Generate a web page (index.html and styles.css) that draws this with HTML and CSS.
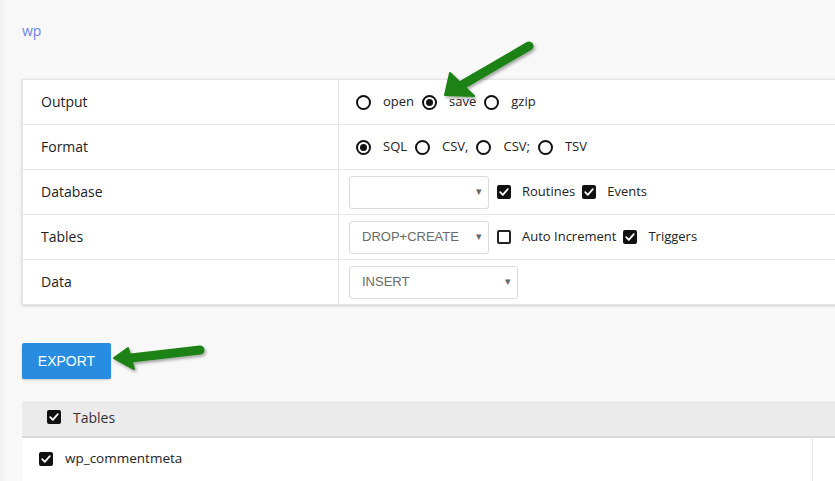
FILE: index.html
```html
<!DOCTYPE html>
<html>
<head>
<meta charset="utf-8">
<link rel="stylesheet" href="styles.css">
</head>
<body>
<div class="page">
  <div class="crumb"><a class="crumb-link">wp</a></div>

  <div class="card">
    <div class="row">
      <div class="label">Output</div>
      <div class="ctrl">
        <span class="opt"><span class="radio"></span><span class="txt">open</span></span>
        <span class="opt"><span class="radio on"></span><span class="txt">save</span></span>
        <span class="opt"><span class="radio"></span><span class="txt">gzip</span></span>
      </div>
    </div>
    <div class="row">
      <div class="label">Format</div>
      <div class="ctrl">
        <span class="opt"><span class="radio on"></span><span class="txt">SQL</span></span>
        <span class="opt"><span class="radio"></span><span class="txt">CSV,</span></span>
        <span class="opt"><span class="radio"></span><span class="txt">CSV;</span></span>
        <span class="opt"><span class="radio"></span><span class="txt">TSV</span></span>
      </div>
    </div>
    <div class="row">
      <div class="label">Database</div>
      <div class="ctrl">
        <div class="select w139"><span class="sel-text"></span><span class="caret">▾</span></div>
        <span class="opt chk"><span class="check on"><svg viewBox="0 0 14 14"><path d="M3.2 7.2 L5.8 9.8 L10.8 4.2" /></svg></span><span class="txt">Routines</span></span>
        <span class="opt chk"><span class="check on"><svg viewBox="0 0 14 14"><path d="M3.2 7.2 L5.8 9.8 L10.8 4.2" /></svg></span><span class="txt">Events</span></span>
      </div>
    </div>
    <div class="row">
      <div class="label">Tables</div>
      <div class="ctrl">
        <div class="select w139"><span class="sel-text">DROP+CREATE</span><span class="caret">▾</span></div>
        <span class="opt chk"><span class="check"></span><span class="txt">Auto Increment</span></span>
        <span class="opt chk"><span class="check on"><svg viewBox="0 0 14 14"><path d="M3.2 7.2 L5.8 9.8 L10.8 4.2" /></svg></span><span class="txt">Triggers</span></span>
      </div>
    </div>
    <div class="row last">
      <div class="label">Data</div>
      <div class="ctrl">
        <div class="select w168"><span class="sel-text">INSERT</span><span class="caret">▾</span></div>
      </div>
    </div>
  </div>

  <div class="actions"><button class="export">EXPORT</button></div>

  <div class="tables">
    <div class="tables-head">
      <span class="check on"><svg viewBox="0 0 14 14"><path d="M3.2 7.2 L5.8 9.8 L10.8 4.2" /></svg></span>
      <span class="head-txt">Tables</span>
    </div>
    <div class="tables-body">
      <div class="trow">
        <span class="check on"><svg viewBox="0 0 14 14"><path d="M3.2 7.2 L5.8 9.8 L10.8 4.2" /></svg></span>
        <span class="trow-txt">wp_commentmeta</span>
      </div>
    </div>
  </div>
</div>

<svg class="arrow arrow1" width="110" height="80" viewBox="0 0 110 80">
  <defs>
    <filter id="sh1" x="-20%" y="-20%" width="140%" height="140%">
      <feDropShadow dx="1.5" dy="2" stdDeviation="1.5" flood-color="#000" flood-opacity="0.35"/>
    </filter>
  </defs>
  <g filter="url(#sh1)" fill="#1e8216" stroke="#1e8216">
    <line x1="95" y1="11" x2="28" y2="50" stroke-width="9" stroke-linecap="round"/>
    <polygon points="11,60 16,38 40,61" stroke-width="2" stroke-linejoin="round"/>
  </g>
</svg>

<svg class="arrow arrow2" width="110" height="40" viewBox="0 0 110 40">
  <defs>
    <filter id="sh2" x="-20%" y="-30%" width="140%" height="160%">
      <feDropShadow dx="1.5" dy="2" stdDeviation="1.5" flood-color="#000" flood-opacity="0.35"/>
    </filter>
  </defs>
  <g filter="url(#sh2)" fill="#1e8216" stroke="#1e8216">
    <line x1="97" y1="12" x2="28" y2="20" stroke-width="9" stroke-linecap="round"/>
    <polygon points="11,20 25,10 31,31" stroke-width="2" stroke-linejoin="round"/>
  </g>
</svg>
</body>
</html>
```

FILE: styles.css
```css
* { box-sizing: border-box; }
html, body { margin: 0; padding: 0; }
body {
  background: #f8f8f8;
  font-family: "Open Sans", "Liberation Sans", sans-serif;
  color: #222;
  width: 835px;
  height: 481px;
  overflow: hidden;
  position: relative;
  box-shadow: inset 6px 0 6px -5px rgba(0,0,0,0.06);
}
.page {
  padding: 21px 0 0 22px;
}
.crumb {
  height: 21px;
  line-height: 20px;
  font-size: 14px;
}
.crumb-link {
  color: #6a87ec;
  text-decoration: none;
}
.card {
  margin-top: 37px;
  width: 830px;
  background: #fff;
  border: 1px solid #e4e4e4;
  border-right: none;
  box-shadow: 0 1px 3px rgba(0,0,0,0.18);
}
.row {
  display: grid;
  grid-template-columns: 316px 1fr;
  height: 45px;
  border-bottom: 1px solid #e6e6e6;
}
.row.last { border-bottom: none; height: 44px; }
.label {
  display: flex;
  align-items: center;
  padding-left: 18px;
  padding-bottom: 2px;
  font-size: 14px;
  color: #222;
  border-right: 1px solid #e6e6e6;
}
.ctrl {
  display: flex;
  align-items: center;
  padding-left: 10px;
  font-size: 13px;
  color: #222;
}
.opt {
  display: inline-flex;
  align-items: center;
  margin-right: 8px;
}
.opt .txt { position: relative; top: -1px; }
.opt:first-child { margin-left: 7px; }
.opt .txt { margin-left: 12px; }
.opt.chk { margin-right: 7px; }
.opt.chk .txt { margin-left: 11px; }
.radio {
  width: 15px;
  height: 15px;
  border: 2px solid #111;
  border-radius: 50%;
  position: relative;
  display: inline-block;
  background: #fff;
}
.radio.on::after {
  content: "";
  position: absolute;
  left: 50%; top: 50%;
  width: 7px; height: 7px;
  margin: -3.5px 0 0 -3.5px;
  border-radius: 50%;
  background: #111;
}
.check {
  width: 14px;
  height: 14px;
  border: 2px solid #222;
  border-radius: 2px;
  display: inline-flex;
  align-items: center;
  justify-content: center;
  background: #fff;
}
.check.on {
  background: #111;
  border-color: #111;
}
.check svg {
  width: 14px; height: 14px;
  flex: none;
}
.check svg path {
  fill: none;
  stroke: #fff;
  stroke-width: 1.8;
  stroke-linecap: round;
  stroke-linejoin: round;
}
.select {
  height: 33px;
  border: 1px solid #dcdcdc;
  border-radius: 3px;
  display: flex;
  align-items: center;
  justify-content: space-between;
  padding: 0 6px 1px 12px;
  margin-right: 8px;
  font-family: "Liberation Sans", Arial, sans-serif;
  font-size: 13px;
  color: #6a6a6a;
  background: #fff;
}
.w139 { width: 140px; }
.w168 { width: 169px; }
.caret {
  font-size: 11px;
  color: #666;
  margin-top: -1px;
}
.actions {
  margin-top: 38px;
}
.export {
  height: 36px;
  width: 89px;
  padding: 0;
  border: none;
  border-radius: 2px;
  background: #288ce0;
  color: #fff;
  font-family: "Liberation Sans", Arial, sans-serif;
  font-size: 14px;
  box-shadow: 0 1px 2px rgba(0,0,0,0.2);
}
.tables {
  margin-top: 22px;
  width: 830px;
}
.tables-head {
  height: 37px;
  background: #ebebeb;
  border-bottom: 2px solid #d9d9d9;
  display: flex;
  align-items: center;
  padding-left: 25px;
  padding-bottom: 3px;
  font-size: 14px;
  color: #333;
}
.head-txt { margin-left: 12px; }
.tables-body {
  background: #fff;
  height: 60px;
  display: flex;
}
.trow {
  width: 791px;
  height: 60px;
  border-right: 1px solid #e6e6e6;
  display: flex;
  align-items: center;
  padding-left: 17px;
  padding-bottom: 18px;
  font-size: 13.5px;
  color: #222;
}
.trow-txt { margin-left: 12px; position: relative; top: -1px; }
.arrow {
  position: absolute;
}
.arrow1 { left: 434px; top: 35px; }
.arrow2 { left: 103px; top: 338px; }
```
